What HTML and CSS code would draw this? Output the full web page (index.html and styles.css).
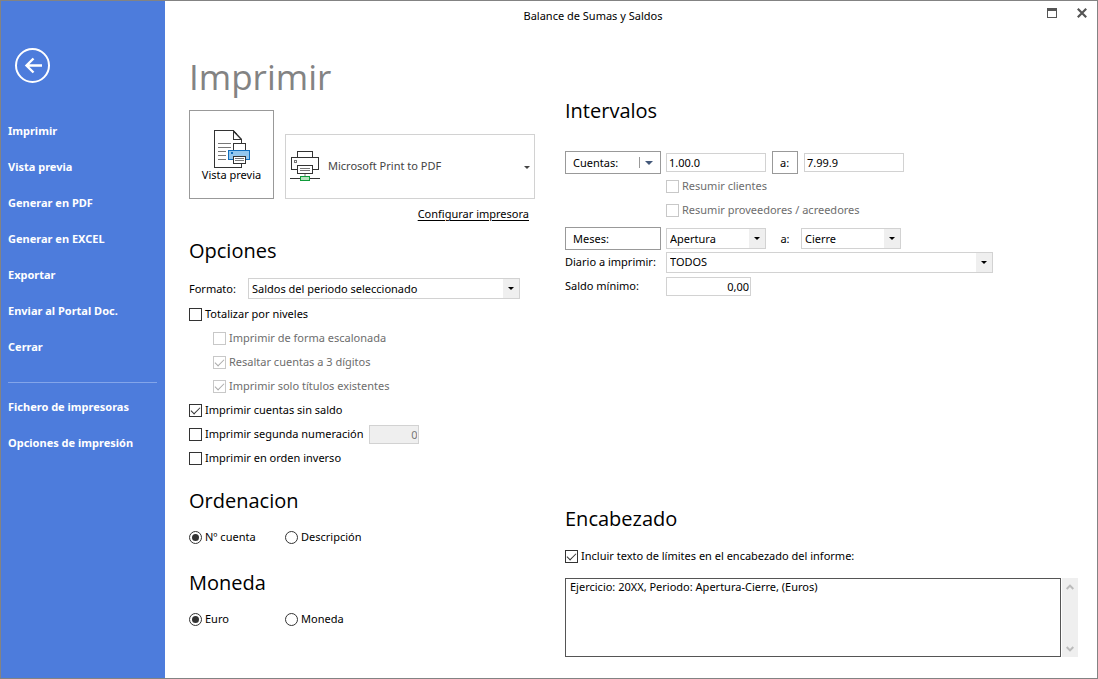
FILE: index.html
```html
<!DOCTYPE html>
<html lang="es">
<head>
<meta charset="utf-8">
<title>Balance de Sumas y Saldos</title>
<link rel="stylesheet" href="styles.css">
</head>
<body>
<div class="window">
  <aside class="sidebar">
    <button class="back" type="button" aria-label="Volver">
      <svg width="36" height="36" viewBox="0 0 36 36" fill="none" stroke="#fff">
        <circle cx="17.500" cy="18.500" r="16.500" stroke-width="2"/>
        <path d="M27 18.500H11M18.500 11.500L11.500 18.500L18.500 25.500" stroke-width="2.400"/>
      </svg>
    </button>
    <nav class="menu">
      <a href="#">Imprimir</a>
      <a href="#">Vista previa</a>
      <a href="#">Generar en PDF</a>
      <a href="#">Generar en EXCEL</a>
      <a href="#">Exportar</a>
      <a href="#">Enviar al Portal Doc.</a>
      <a href="#">Cerrar</a>
      <hr>
      <a href="#">Fichero de impresoras</a>
      <a href="#">Opciones de impresión</a>
    </nav>
  </aside>

  <main class="main">
    <header class="titlebar">
      <div class="title">Balance de Sumas y Saldos</div>
      <div class="controls">
        <button type="button" aria-label="Maximizar">
          <svg width="10" height="10" viewBox="0 0 10 10" shape-rendering="crispEdges"><path d="M.5 2V9.500H9.500V2" fill="none" stroke="#555"/><path d="M0 0H10V3H0Z" fill="#555"/></svg>
        </button>
        <button type="button" aria-label="Cerrar ventana">
          <svg width="10" height="10" viewBox="0 0 10 10"><path d="M.8.8L9.200 9.200M9.200.8L.8 9.200" fill="none" stroke="#555" stroke-width="2.200"/></svg>
        </button>
      </div>
    </header>

    <div class="columns">
      <div class="left">
        <h1>Imprimir</h1>
        <div class="print">
          <button class="preview" type="button">
            <svg width="36" height="38" viewBox="0 0 36 38" fill="none" shape-rendering="crispEdges">
              <path d="M27.500 13V9.500L19 .5H.5V37.500H27.500V34" stroke="#333"/>
              <path d="M19.500 .5V9.500H27.500" stroke="#333"/>
              <path d="M19.500 1L27.500 9.500" stroke="#333" shape-rendering="auto" stroke-width="1.400"/>
              <path d="M4 13.500H17M4 17.500H17M4 21.500H12M4 25.500H12M4 29.500H12" stroke="#777"/>
              <path d="M19.500 20.500V13.500H31.500V20.500" fill="#fff" stroke="#333"/>
              <path d="M14.500 20.500H35.500V29.500H14.500Z" fill="#93c7ee" stroke="#106ebe"/>
              <path d="M17 22H19V24H17Z" fill="#106ebe"/>
              <path d="M19.500 26.500H31.500V33.500H19.500Z" fill="#fff" stroke="#333"/>
              <path d="M21 28.500H30M21 30.500H30" stroke="#777"/>
            </svg>
            <span>Vista previa</span>
          </button>
          <label class="printer">
            <svg width="30" height="30" viewBox="0 0 30 30" fill="none" shape-rendering="crispEdges">
              <path d="M7.500 6.500V.5H22.500V6.500" stroke="#333"/>
              <path d="M7.500 18.500H1.500V6.500H28.500V18.500H22.500" stroke="#333"/>
              <path d="M4.500 9.500H6.500V11.500H4.500Z" stroke="#777"/>
              <path d="M7.500 14.500H22.500V22.500H7.500Z" fill="#fff" stroke="#333"/>
              <path d="M10 17.500H20M10 19.500H20" stroke="#777"/>
              <path d="M14 23H16V25H14Z" fill="#bbb"/>
              <path d="M0 27.500H30" stroke="#333"/>
              <path d="M10.500 25.500H19.500V29.500H10.500Z" fill="#b5e3bd" stroke="#0f9b3a"/>
            </svg>
            <select aria-label="Impresora"><option>Microsoft Print to PDF</option></select>
          </label>
        </div>
        <div class="configure"><a href="#">Configurar impresora</a></div>

        <section class="options">
          <h2>Opciones</h2>
          <div class="row format">
            <label for="formato">Formato:</label>
            <span class="combo"><select id="formato"><option>Saldos del periodo seleccionado</option></select></span>
          </div>
          <label class="row check"><input type="checkbox">Totalizar por niveles</label>
          <label class="row check nested off"><input type="checkbox" disabled>Imprimir de forma escalonada</label>
          <label class="row check nested off"><input type="checkbox" checked disabled>Resaltar cuentas a 3 dígitos</label>
          <label class="row check nested off"><input type="checkbox" checked disabled>Imprimir solo títulos existentes</label>
          <label class="row check"><input type="checkbox" checked>Imprimir cuentas sin saldo</label>
          <div class="row second">
            <label class="check"><input type="checkbox">Imprimir segunda numeración</label>
            <input class="field number" type="text" value="0" disabled aria-label="Segunda numeración">
          </div>
          <label class="row check"><input type="checkbox">Imprimir en orden inverso</label>
        </section>

        <section class="choice">
          <h2>Ordenacion</h2>
          <div class="row radios">
            <label class="check"><input type="radio" name="orden" checked>Nº cuenta</label>
            <label class="check"><input type="radio" name="orden">Descripción</label>
          </div>
        </section>
        <section class="choice">
          <h2>Moneda</h2>
          <div class="row radios">
            <label class="check"><input type="radio" name="moneda" checked>Euro</label>
            <label class="check"><input type="radio" name="moneda">Moneda</label>
          </div>
        </section>
      </div>

      <div class="right">
        <section>
          <h2>Intervalos</h2>
          <div class="ranges">
            <button class="boxed split" type="button">Cuentas:</button>
            <div class="line">
              <input class="field" type="text" value="1.00.0" aria-label="Cuenta inicial">
              <button class="boxed to" type="button">a:</button>
              <input class="field" type="text" value="7.99.9" aria-label="Cuenta final">
            </div>
            <label class="row check second-col off"><input type="checkbox" disabled>Resumir clientes</label>
            <label class="row check second-col off"><input type="checkbox" disabled>Resumir proveedores / acreedores</label>
            <button class="boxed months" type="button">Meses:</button>
            <div class="line months">
              <span class="combo"><select aria-label="Mes inicial"><option>Apertura</option></select></span>
              <span class="between">a:</span>
              <span class="combo"><select aria-label="Mes final"><option>Cierre</option></select></span>
            </div>
            <label class="caption" for="diario">Diario a imprimir:</label>
            <span class="combo wide"><select id="diario"><option>TODOS</option></select></span>
            <label class="caption" for="saldo">Saldo mínimo:</label>
            <input class="field amount" id="saldo" type="text" value="0,00">
          </div>
        </section>

        <section class="heading">
          <h2>Encabezado</h2>
          <label class="row check"><input type="checkbox" checked>Incluir texto de límites en el encabezado del informe:</label>
          <div class="memo">
            <textarea aria-label="Texto del encabezado">Ejercicio: 20XX, Periodo: Apertura-Cierre, (Euros)</textarea>
            <div class="scroll">
              <button type="button" aria-label="Subir"><svg width="8" height="6" viewBox="0 0 8 6"><path d="M.7 5L4 1.600L7.300 5" fill="none" stroke="#bbb" stroke-width="2"/></svg></button>
              <button type="button" aria-label="Bajar"><svg width="8" height="6" viewBox="0 0 8 6"><path d="M.7 1L4 4.400L7.300 1" fill="none" stroke="#bbb" stroke-width="2"/></svg></button>
            </div>
          </div>
        </section>
      </div>
    </div>
  </main>
</div>
</body>
</html>
```

FILE: styles.css
```css
*, *::before, *::after { box-sizing: border-box; }

body {
  margin: 0;
  font: 11px/16px "Noto Sans", "Open Sans", sans-serif;
  color: #000;
  background: #fff;
}

button, input, select, textarea {
  margin: 0;
  font: inherit;
  color: inherit;
}

button { padding: 0; border: 0; background: none; }
svg { display: block; flex: none; }

.window {
  display: flex;
  min-height: 100vh;
  border: 1px solid #838383;
}

/* Sidebar */
.sidebar {
  flex: none;
  width: 164px;
  padding: 46px 8px 0 7px;
  background: #4d7cdc;
  color: #fff;
}

.back { display: block; margin-left: 7px; }
.menu { margin-top: 30px; }

.menu a {
  display: block;
  font-weight: 700;
  line-height: 36px;
  color: #fff;
  text-decoration: none;
  white-space: nowrap;
}

.menu hr {
  height: 1px;
  margin: 17px 0 6px;
  border: 0;
  background: #83a5ea;
}

/* Title bar */
.main { display: flex; flex: 1; flex-direction: column; min-width: 0; }
.titlebar { display: flex; height: 29px; }

.title {
  flex: 1;
  font-size: 11px;
  line-height: 30px;
  text-align: center;
}

.controls {
  display: flex;
  justify-content: flex-end;
  gap: 20px;
  width: 76px;
  padding: 7px 10px 0 0;
}

.controls button { height: 10px; }

/* Columns */
.columns { display: flex; flex: 1; gap: 30px; padding: 0 19px 21px 24px; }
.left { flex: none; width: 346px; }
.right { display: flex; flex: 1; flex-direction: column; padding-top: 65px; }

h1, h2 { margin: 0; font-family: "Open Sans", "Noto Sans", sans-serif; font-weight: 400; }
h1 { margin-top: 19px; font-size: 35px; line-height: 56px; color: #838383; }
h2 { font-size: 20px; line-height: 32px; }

/* Printer */
.print { display: flex; align-items: flex-end; gap: 11px; margin-top: 5px; }

.preview {
  display: flex;
  flex: none;
  flex-direction: column;
  align-items: center;
  width: 85px;
  height: 89px;
  padding-top: 19px;
  border: 1px solid #999;
}

.preview span { line-height: 14px; }

.printer {
  position: relative;
  display: flex;
  flex: 1;
  align-items: center;
  gap: 8px;
  height: 65px;
  padding: 0 0 2px 4px;
  border: 1px solid #d2d2d2;
}

.printer select {
  flex: 1;
  height: 61px;
  padding: 0;
  border: 0;
  appearance: none;
  background: none;
  color: #444;
}

.printer::after, .combo::after, .split::after {
  content: "";
  border: 3px solid transparent;
  border-top-color: #000;
  border-bottom: 0;
  pointer-events: none;
}

.printer::after { position: absolute; top: 31px; right: 4px; border-top-color: #444; }

.configure { padding: 7px 6px 0 0; text-align: right; }
.configure a { color: #000; text-underline-offset: 2px; }

/* Rows */
.row { display: flex; align-items: center; min-height: 24px; }
.options { margin-top: 13px; }
.options h2 { margin-bottom: 9px; }
.check { display: flex; align-items: center; gap: 3px; }
.nested { padding-left: 24px; }
.off { color: #6d6d6d; }
.format { gap: 12px; min-height: 25px; margin-bottom: 1px; }
.format .combo { width: 272px; }
.second { gap: 6px; }
.choice { margin-top: 15px; }
.choice + .choice { margin-top: 18px; }
.choice h2 { margin-bottom: 8px; }
.radios .check { width: 96px; }

input[type="checkbox"], input[type="radio"] {
  position: relative;
  flex: none;
  width: 13px;
  height: 13px;
  border: 1px solid #333;
  appearance: none;
  background: #fff;
}

input[type="radio"] { border-radius: 50%; }
input[type="checkbox"]:disabled { border-color: #c8c8c8; }

input[type="checkbox"]:checked::after {
  content: "";
  position: absolute;
  top: 2px;
  left: 1px;
  width: 9px;
  height: 5px;
  border: solid #333;
  border-width: 0 0 1px 1px;
  transform: rotate(-45deg);
}

input[type="checkbox"]:disabled::after { border-color: #aaa; }

input[type="radio"]:checked::after {
  content: "";
  position: absolute;
  top: 2px;
  left: 2px;
  width: 7px;
  height: 7px;
  border-radius: 50%;
  background: #333;
}

/* Fields */
.field {
  width: 100px;
  height: 19px;
  padding: 0 2px;
  border: 1px solid #d2d2d2;
  background: #fff;
}

.number { width: 50px; padding-right: 1px; text-align: right; }
.number:disabled { background: #efefef; color: #777; }
.amount { width: 85px; padding-right: 1px; text-align: right; }

.combo { position: relative; display: block; width: 100px; height: 21px; }

.combo select {
  display: block;
  width: 100%;
  height: 100%;
  padding: 0 20px 0 3px;
  border: 1px solid #d2d2d2;
  border-radius: 0;
  appearance: none;
  background: linear-gradient(#efefef, #efefef) right / 16px 100% no-repeat #fff;
}

.combo::after { position: absolute; top: 9px; right: 6px; }

/* Ranges */
.ranges {
  display: grid;
  grid-template-columns: 96px 1fr;
  column-gap: 5px;
  align-items: center;
  margin-top: 24px;
}

.boxed {
  height: 23px;
  padding: 0 7px;
  border: 1px solid #999;
  text-align: left;
}

.split {
  display: flex;
  align-items: center;
  justify-content: space-between;
  background: linear-gradient(#999, #999) right 20px center / 1px 11px no-repeat;
}

.split::after { border-width: 4px 4px 0; border-top-color: #44597a; }
.line { display: flex; align-items: center; gap: 6px; }
.to { width: 26px; }
.second-col { grid-column: 2; }
.months { margin-top: 5px; }
.line.months { gap: 0; }
.between { width: 35px; padding-left: 3px; text-align: center; }
.caption { line-height: 24px; white-space: nowrap; }
.wide { width: 327px; }

/* Report heading */
.heading { margin-top: auto; }
.heading h2 { margin-bottom: 9px; }
.memo { display: flex; gap: 1px; margin-top: 10px; }

.memo textarea {
  flex: 1;
  height: 79px;
  padding: 0 4px;
  border: 1px solid #555;
  outline: 0;
  resize: none;
}

.scroll {
  display: flex;
  flex-direction: column;
  justify-content: space-between;
  width: 16px;
  padding: 6px 4px 5px;
  background: #efefef;
}
```
